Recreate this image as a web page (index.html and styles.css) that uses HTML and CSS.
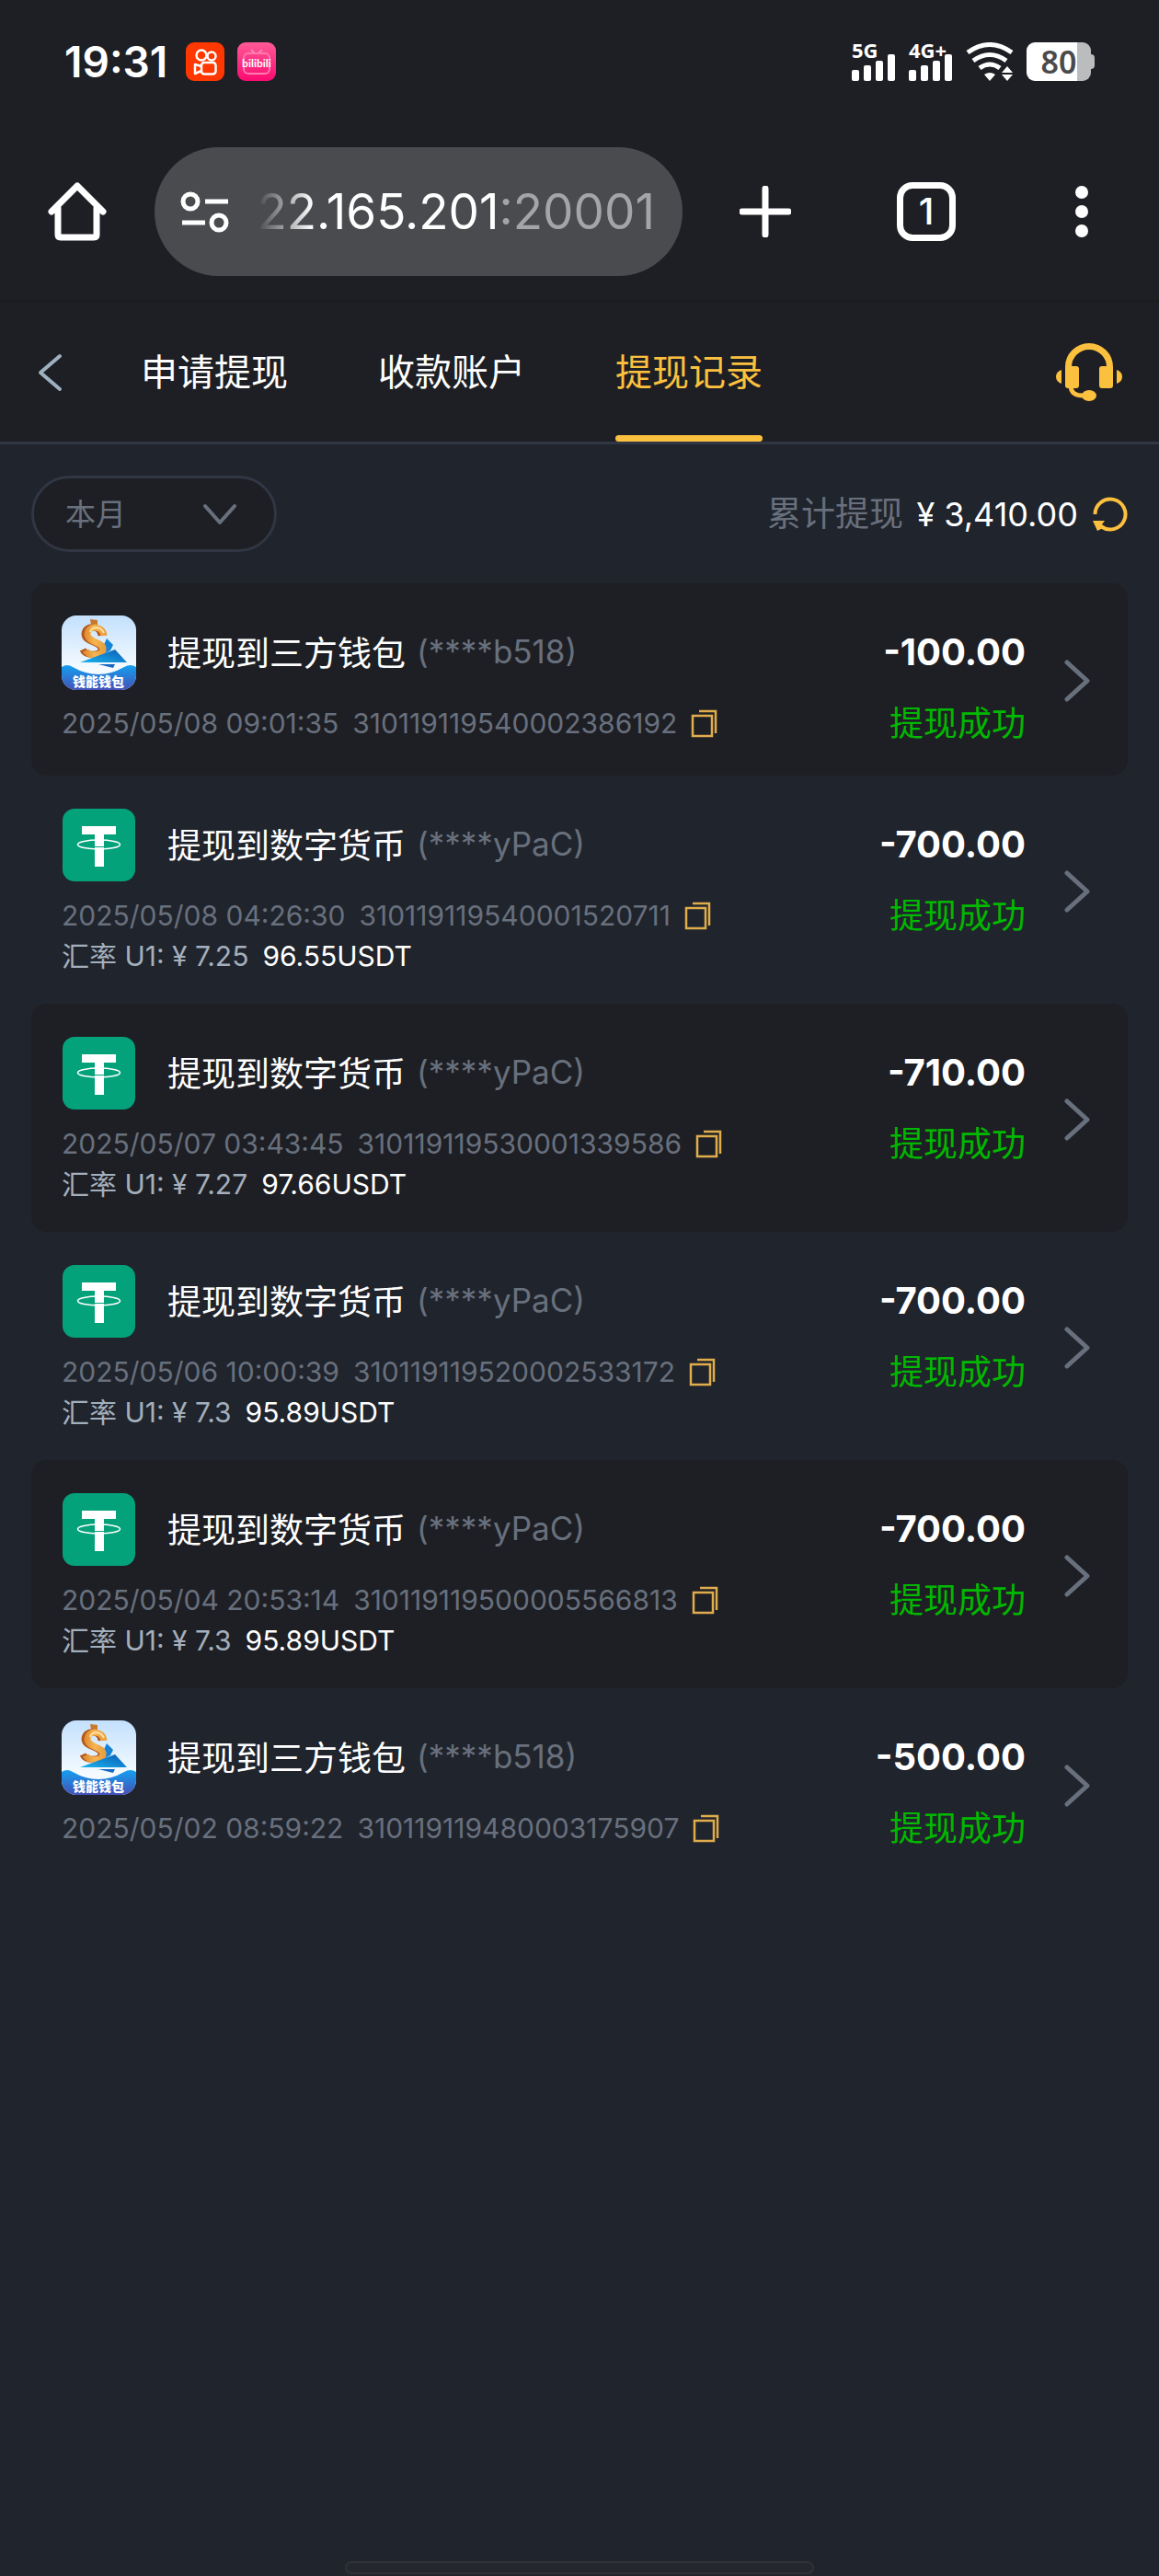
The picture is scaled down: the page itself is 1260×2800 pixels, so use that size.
FILE: index.html
```html
<!DOCTYPE html>
<html lang="zh-CN">
<head>
  <meta charset="UTF-8">
  <meta name="viewport" content="width=device-width, initial-scale=1.0">
  <title>提现记录</title>
  <link rel="stylesheet" href="styles.css">
</head>
<body>
  <!-- icons used more than once -->
  <svg class="defs" aria-hidden="true">
    <defs>
      <linearGradient id="sky" x1="0" y1="0" x2="0" y2="1">
        <stop offset="0" stop-color="#c3e0fd"/>
        <stop offset="0.7" stop-color="#f4faff"/>
      </linearGradient>
      <linearGradient id="sea" x1="0" y1="0" x2="0" y2="1">
        <stop offset="0" stop-color="#14a0f0"/>
        <stop offset="1" stop-color="#4550b8"/>
      </linearGradient>
      <linearGradient id="gold" x1="0" y1="0" x2="1" y2="0">
        <stop offset="0" stop-color="#e08f35"/>
        <stop offset="0.5" stop-color="#f6b550"/>
        <stop offset="1" stop-color="#e9a040"/>
      </linearGradient>
      <linearGradient id="sail" x1="0" y1="1" x2="1" y2="0">
        <stop offset="0" stop-color="#19b4ea"/>
        <stop offset="1" stop-color="#0c5ab8"/>
      </linearGradient>
      <clipPath id="round"><rect width="81" height="81" rx="16"/></clipPath>
    </defs>
    <symbol id="wallet" viewBox="0 0 81 81">
      <g clip-path="url(#round)">
        <rect width="81" height="81" fill="url(#sky)"/>
        <path d="M0 56q6-4 12 0q28 16 56 0q7-4 13 0v25H0z" fill="url(#sea)"/>
        <path d="M49 25l7 7-3 6-13 7z" fill="#1584d6"/>
        <path d="M31 4l8 1v5h-7z" fill="#c9782c"/>
        <path d="M43 22C42 10 26 10 25 20C25 30 44 28 43 37C42 44 26 44 23 37" fill="none" stroke="#b5561c" stroke-width="7"/>
        <path d="M46 22C45 11 29 10 28 20C28 30 46 28 45 37C44 45 29 44 26 38" fill="none" stroke="url(#gold)" stroke-width="7"/>
        <path d="M46 19C43 12 33 11 31 18" fill="none" stroke="#ffe0a0" stroke-width="2"/>
        <path d="M20 51l38-14 13 14z" fill="url(#sail)"/>
        <path d="M40 53h18l-2 4z" fill="#1468c0"/>
      </g>
    </symbol>
    <symbol id="usdt" viewBox="0 0 81 81">
      <rect x="1" y="1" width="79" height="79" rx="13" fill="#04a27a"/>
      <path d="M22 20h37v9H46v35H36V29H22z" fill="#fff"/>
      <path d="M36 42.500h10" stroke="#04a27a" stroke-width="1"/>
      <ellipse cx="40.500" cy="40" rx="23" ry="5" fill="none" stroke="#fff" stroke-width="1.500"/>
    </symbol>
    <symbol id="copy" viewBox="0 0 30 32">
      <path d="M2 8h21v22H2zM9 3h18v24" fill="none" stroke="#e0ad4c" stroke-width="2.500"/>
    </symbol>
    <symbol id="next" viewBox="0 0 28 46">
      <path d="M3 3l22 20L3 43" fill="none" stroke="#68707d" stroke-width="5" stroke-linecap="round" stroke-linejoin="round"/>
    </symbol>
    <symbol id="signal" viewBox="0 0 48 29">
      <rect x="0" y="17" width="8" height="12" rx="2" fill="#fff"/>
      <rect x="13" y="12" width="8" height="17" rx="2" fill="#fff"/>
      <rect x="26" y="7" width="8" height="22" rx="2" fill="#fff"/>
      <rect x="39" y="0" width="8" height="29" rx="2" fill="#fff"/>
    </symbol>
  </svg>

  <div class="top">
    <div class="status-bar">
      <span class="time">19:31</span>
      <svg class="app-icon" viewBox="0 0 42 42" aria-hidden="true">
        <rect width="42" height="42" rx="9" fill="#ff3700"/>
        <g fill="none" stroke="#fff" stroke-width="2.500" stroke-linejoin="round">
          <circle cx="17" cy="14" r="5.500"/>
          <circle cx="28" cy="15" r="4.500"/>
          <rect x="17" y="22" width="15.500" height="12.500" rx="3"/>
          <path d="M17 26l-7-2v10l7-3"/>
        </g>
      </svg>
      <svg class="app-icon" viewBox="0 0 42 42" aria-hidden="true">
        <defs>
          <linearGradient id="pink" x1="0" y1="0" x2="0" y2="1">
            <stop offset="0" stop-color="#ff5a96"/>
            <stop offset="1" stop-color="#fb0a72"/>
          </linearGradient>
        </defs>
        <rect width="42" height="42" rx="9" fill="url(#pink)"/>
        <path d="M15 8l4 4M27 8l-4 4" stroke="#ff8ab8" stroke-width="2"/>
        <rect x="7" y="12" width="28" height="22" rx="5" fill="none" stroke="#ff7bb0" stroke-width="2"/>
        <text x="21" y="27" class="bili" text-anchor="middle">bilibili</text>
      </svg>
      <div class="status-right">
        <div class="network">
          <span>5G</span>
          <svg width="48" height="29"><use href="#signal"/></svg>
        </div>
        <div class="network">
          <span>4G+</span>
          <svg width="48" height="29"><use href="#signal"/></svg>
        </div>
        <svg class="wifi" viewBox="0 0 52 42" aria-hidden="true">
          <g fill="none" stroke="#fff" stroke-width="5">
            <path d="M2 11q24-17 48 0"/>
            <path d="M8 20q18-13 36 0"/>
            <path d="M15 28q11-8 22 0"/>
          </g>
          <path d="M20 35q6-4 12 0l-6 7zM45 26l6 7H39zM39 35h12l-6 7z" fill="#fff"/>
        </svg>
        <div class="battery">80</div>
      </div>
    </div>

    <div class="browser-bar">
      <button class="icon-btn" aria-label="主页">
        <svg width="64" height="64" viewBox="0 0 64 64">
          <path d="M11 28v29q0 3 3 3h36q3 0 3-3V28M4 32L32 4l28 28" fill="none" stroke="#fff" stroke-width="7" stroke-linecap="round" stroke-linejoin="round"/>
        </svg>
      </button>
      <div class="url-bar">
        <svg width="54" height="46" viewBox="0 0 54 46" aria-hidden="true">
          <g fill="none" stroke="#fff" stroke-width="5">
            <circle cx="11" cy="12" r="8"/>
            <circle cx="42" cy="35" r="8"/>
            <path d="M27 12h25M2 35h25"/>
          </g>
        </svg>
        <button class="url"><span>22.165.201<span class="port">:20001</span></span></button>
      </div>
      <div class="browser-actions">
        <button class="icon-btn" aria-label="新标签页">
          <svg width="56" height="56" viewBox="0 0 56 56">
            <path d="M28 3v50M3 28h50" stroke="#fff" stroke-width="7" stroke-linecap="round"/>
          </svg>
        </button>
        <button class="tab-count">1</button>
        <button class="icon-btn" aria-label="菜单">
          <svg width="44" height="56" viewBox="0 0 44 56">
            <g fill="#fff"><circle cx="22" cy="7" r="7"/><circle cx="22" cy="28" r="7"/><circle cx="22" cy="49" r="7"/></g>
          </svg>
        </button>
      </div>
    </div>

    <nav class="tabs">
      <a class="back" href="#" aria-label="返回">
        <svg width="28" height="42" viewBox="0 0 28 42">
          <path d="M25 3L4 21l21 18" fill="none" stroke="#9fb0c0" stroke-width="4" stroke-linecap="round" stroke-linejoin="round"/>
        </svg>
      </a>
      <a class="tab" href="#">申请提现</a>
      <a class="tab" href="#">收款账户</a>
      <a class="tab active" href="#">提现记录</a>
      <a class="service" href="#" aria-label="客服">
        <svg width="72" height="64" viewBox="0 0 72 64">
          <g fill="none" stroke="#fcc03f">
            <path d="M13.500 28v-2a22.500 22.500 0 0 1 45 0v2" stroke-width="7"/>
            <path d="M16 46q0 12 16 11" stroke-width="5"/>
          </g>
          <g fill="#fcc03f">
            <rect x="10" y="25" width="15" height="24" rx="3"/>
            <rect x="47" y="25" width="15" height="24" rx="3"/>
            <ellipse cx="36" cy="57" rx="8" ry="6"/>
            <path d="M6 29v15q-6-2-6-7.500t6-7.500zM66 29v15q6-2 6-7.500t-6-7.500z"/>
          </g>
        </svg>
      </a>
    </nav>
  </div>

  <main>
    <div class="filter">
      <div class="period">
        <select aria-label="时间">
          <option>本月</option>
          <option>上月</option>
        </select>
        <svg width="36" height="24" viewBox="0 0 36 24" aria-hidden="true">
          <path d="M2 3l16 18L34 3" fill="none" stroke="#68707d" stroke-width="4" stroke-linecap="round" stroke-linejoin="round"/>
        </svg>
      </div>
      <p class="total">累计提现 <b>¥ 3,410.00</b></p>
      <button class="icon-btn" aria-label="刷新">
        <svg width="38" height="38" viewBox="0 0 38 38">
          <path d="M2.500 19a16.500 16.500 0 1 1 7 13.500" fill="none" stroke="#fcc03f" stroke-width="4"/>
          <path d="M0 26h13l-3 4 3 3-8 4z" fill="#fcc03f"/>
        </svg>
      </button>
    </div>

    <ul class="records">
      <li class="record">
        <div class="info">
          <div class="title"><svg class="logo" viewBox="0 0 81 81"><use href="#wallet"/><text x="40" y="77" text-anchor="middle">钱能钱包</text></svg><span>提现到三方钱包</span><span class="account">(****b518)</span></div>
          <div class="meta"><span>2025/05/08 09:01:35</span><span>310119119540002386192</span><button class="icon-btn" aria-label="复制"><svg width="30" height="32"><use href="#copy"/></svg></button></div>
        </div>
        <div class="amount"><strong>-100.00</strong><span>提现成功</span></div>
        <svg class="next"><use href="#next"/></svg>
      </li>
      <li class="record">
        <div class="info">
          <div class="title"><svg class="logo"><use href="#usdt"/></svg><span>提现到数字货币</span><span class="account">(****yPaC)</span></div>
          <div class="meta"><span>2025/05/08 04:26:30</span><span>310119119540001520711</span><button class="icon-btn" aria-label="复制"><svg width="30" height="32"><use href="#copy"/></svg></button></div>
          <div class="rate"><span>汇率 U1: ¥ 7.25</span><b>96.55USDT</b></div>
        </div>
        <div class="amount"><strong>-700.00</strong><span>提现成功</span></div>
        <svg class="next"><use href="#next"/></svg>
      </li>
      <li class="record">
        <div class="info">
          <div class="title"><svg class="logo"><use href="#usdt"/></svg><span>提现到数字货币</span><span class="account">(****yPaC)</span></div>
          <div class="meta"><span>2025/05/07 03:43:45</span><span>310119119530001339586</span><button class="icon-btn" aria-label="复制"><svg width="30" height="32"><use href="#copy"/></svg></button></div>
          <div class="rate"><span>汇率 U1: ¥ 7.27</span><b>97.66USDT</b></div>
        </div>
        <div class="amount"><strong>-710.00</strong><span>提现成功</span></div>
        <svg class="next"><use href="#next"/></svg>
      </li>
      <li class="record">
        <div class="info">
          <div class="title"><svg class="logo"><use href="#usdt"/></svg><span>提现到数字货币</span><span class="account">(****yPaC)</span></div>
          <div class="meta"><span>2025/05/06 10:00:39</span><span>310119119520002533172</span><button class="icon-btn" aria-label="复制"><svg width="30" height="32"><use href="#copy"/></svg></button></div>
          <div class="rate"><span>汇率 U1: ¥ 7.3</span><b>95.89USDT</b></div>
        </div>
        <div class="amount"><strong>-700.00</strong><span>提现成功</span></div>
        <svg class="next"><use href="#next"/></svg>
      </li>
      <li class="record">
        <div class="info">
          <div class="title"><svg class="logo"><use href="#usdt"/></svg><span>提现到数字货币</span><span class="account">(****yPaC)</span></div>
          <div class="meta"><span>2025/05/04 20:53:14</span><span>310119119500005566813</span><button class="icon-btn" aria-label="复制"><svg width="30" height="32"><use href="#copy"/></svg></button></div>
          <div class="rate"><span>汇率 U1: ¥ 7.3</span><b>95.89USDT</b></div>
        </div>
        <div class="amount"><strong>-700.00</strong><span>提现成功</span></div>
        <svg class="next"><use href="#next"/></svg>
      </li>
      <li class="record">
        <div class="info">
          <div class="title"><svg class="logo" viewBox="0 0 81 81"><use href="#wallet"/><text x="40" y="77" text-anchor="middle">钱能钱包</text></svg><span>提现到三方钱包</span><span class="account">(****b518)</span></div>
          <div class="meta"><span>2025/05/02 08:59:22</span><span>310119119480003175907</span><button class="icon-btn" aria-label="复制"><svg width="30" height="32"><use href="#copy"/></svg></button></div>
        </div>
        <div class="amount"><strong>-500.00</strong><span>提现成功</span></div>
        <svg class="next"><use href="#next"/></svg>
      </li>
    </ul>
  </main>
  <div class="home-bar"></div>
</body>
</html>
```
FILE: styles.css
```css
* {
  box-sizing: border-box;
}
body {
  margin: 0;
  min-height: 100vh;
  display: flex;
  flex-direction: column;
  background-color: #20242c;
  color: #fff;
  font-family: Inter, "Noto Sans CJK SC", sans-serif;
  font-size: 30px;
}
svg {
  display: block;
  flex: none;
}
button {
  padding: 0;
  border: none;
  background: none;
  color: inherit;
  font-family: inherit;
  cursor: pointer;
}
a {
  color: inherit;
  text-decoration: none;
}
.defs {
  position: absolute;
  width: 0;
  height: 0;
}
.top {
  background-color: #1e1f24;
  border-bottom: 3px solid #303643;
}

/* phone status bar */
.status-bar {
  display: flex;
  align-items: center;
  gap: 14px;
  height: 134px;
  padding: 0 74px 0 70px;
}
.time {
  margin-right: 6px;
  font-size: 46px;
  font-weight: 600;
}
.app-icon {
  width: 42px;
  height: 42px;
}
.bili {
  font-family: Lato, sans-serif;
  font-size: 12px;
  font-weight: 700;
  fill: #fff;
}
.status-right {
  display: flex;
  align-items: center;
  gap: 14px;
  margin-left: auto;
}
.network {
  display: grid;
  height: 42px;
}
.network span,
.network svg {
  grid-area: 1 / 1;
}
.network span {
  font-family: "Noto Sans", sans-serif;
  font-size: 22px;
  font-weight: 700;
  line-height: 16px;
}
.network svg {
  align-self: end;
}
.wifi {
  width: 52px;
  height: 42px;
}
.battery {
  position: relative;
  width: 70px;
  height: 42px;
  border-radius: 9px;
  background: linear-gradient(to right, #fff 55px, #bbbcbe 55px);
  color: #4a4a4c;
  font-family: "Noto Sans", sans-serif;
  font-size: 34px;
  font-weight: 600;
  line-height: 42px;
  text-align: center;
}
.battery::after {
  content: "";
  position: absolute;
  left: 100%;
  top: 13px;
  width: 4px;
  height: 16px;
  border-radius: 0 4px 4px 0;
  background-color: #bbbcbe;
}

/* browser toolbar */
.browser-bar {
  display: flex;
  align-items: center;
  height: 195px;
  padding: 0 62px 0 52px;
  border-bottom: 3px solid #1b1c20;
}
.url-bar {
  display: flex;
  align-items: center;
  gap: 30px;
  flex: 1;
  min-width: 0;
  height: 140px;
  margin: 0 62px 0 52px;
  padding: 0 30px 0 28px;
  border-radius: 70px;
  background-color: #4a4b4e;
}
.url {
  display: flex;
  justify-content: flex-end;
  flex: 1;
  min-width: 0;
  overflow: hidden;
  font-size: 53px;
  white-space: nowrap;
  -webkit-mask-image: linear-gradient(to right, transparent, #000 60px);
  mask-image: linear-gradient(to right, transparent, #000 60px);
}
.port {
  color: #a4a5a7;
}
.browser-actions {
  display: flex;
  align-items: center;
  gap: 115px;
}
.tab-count {
  width: 64px;
  height: 64px;
  border: 7px solid #fff;
  border-radius: 17px;
  font-size: 40px;
  font-weight: 500;
  line-height: 50px;
}

/* page tabs */
.tabs {
  display: flex;
  align-items: center;
  height: 151px;
  padding: 0 40px;
}
.back {
  margin-right: 85px;
}
.tab {
  position: relative;
  margin-right: 98px;
  font-size: 40px;
  line-height: 151px;
}
.tab.active {
  color: #fcc03f;
}
.tab.active::after {
  content: "";
  position: absolute;
  left: 0;
  right: 0;
  bottom: 0;
  height: 7px;
  border-radius: 4px;
  background-color: #fcc03f;
}
.service {
  margin-left: auto;
}

/* period filter and total */
main {
  flex: 1;
  padding: 0 34px;
}
.filter {
  display: flex;
  align-items: center;
  gap: 16px;
  padding: 34px 0;
}
.period {
  position: relative;
  margin-right: auto;
}
.period select {
  appearance: none;
  width: 267px;
  height: 83px;
  padding: 0 34px;
  border: 3px solid #303643;
  border-radius: 42px;
  background-color: #1e1f24;
  color: #68707d;
  font-family: inherit;
  font-size: 33px;
}
.period svg {
  position: absolute;
  right: 44px;
  top: 30px;
  pointer-events: none;
}
.total {
  margin: 0;
  font-size: 37px;
  line-height: 52px;
  color: #68707d;
}
.total b {
  margin-left: 4px;
  color: #fff;
  font-size: 36px;
  font-weight: 400;
}

/* withdrawal records */
.records {
  margin: 0;
  padding: 0;
  list-style: none;
}
.record {
  display: flex;
  align-items: center;
  padding: 35px 41px 32px 33px;
  border-radius: 17px;
}
.record:nth-child(odd) {
  background-color: #1e1f24;
}
.info {
  flex: 1;
}
.title {
  display: flex;
  align-items: center;
  font-size: 37px;
}
.title span {
  padding-bottom: 4px;
}
.logo {
  width: 81px;
  height: 81px;
  margin-right: 34px;
}
.logo text {
  font-size: 14px;
  font-weight: 900;
  fill: #fff;
}
.title .account {
  margin-left: 12px;
  color: #68707d;
  font-size: 35px;
}
.meta {
  display: flex;
  align-items: center;
  gap: 15px;
  height: 39px;
  margin: 16px 0 6px;
  color: #68707d;
}
.rate {
  display: flex;
  align-items: baseline;
  gap: 15px;
  height: 39px;
  line-height: 39px;
  color: #a3afbc;
}
.rate b {
  color: #fff;
  font-weight: 400;
}
.amount {
  display: flex;
  flex-direction: column;
  align-self: flex-start;
  align-items: flex-end;
  gap: 30px;
  padding-top: 16px;
  font-size: 37px;
  line-height: 48px;
  color: #00b800;
}
.amount strong {
  color: #fff;
  font-size: 40px;
  font-weight: 700;
}
.next {
  width: 28px;
  height: 46px;
  margin-left: 42px;
}
.home-bar {
  width: 510px;
  height: 14px;
  margin: 0 auto 2px;
  border: 2px solid #303237;
  border-radius: 7px;
  background-color: #25272e;
}
```
